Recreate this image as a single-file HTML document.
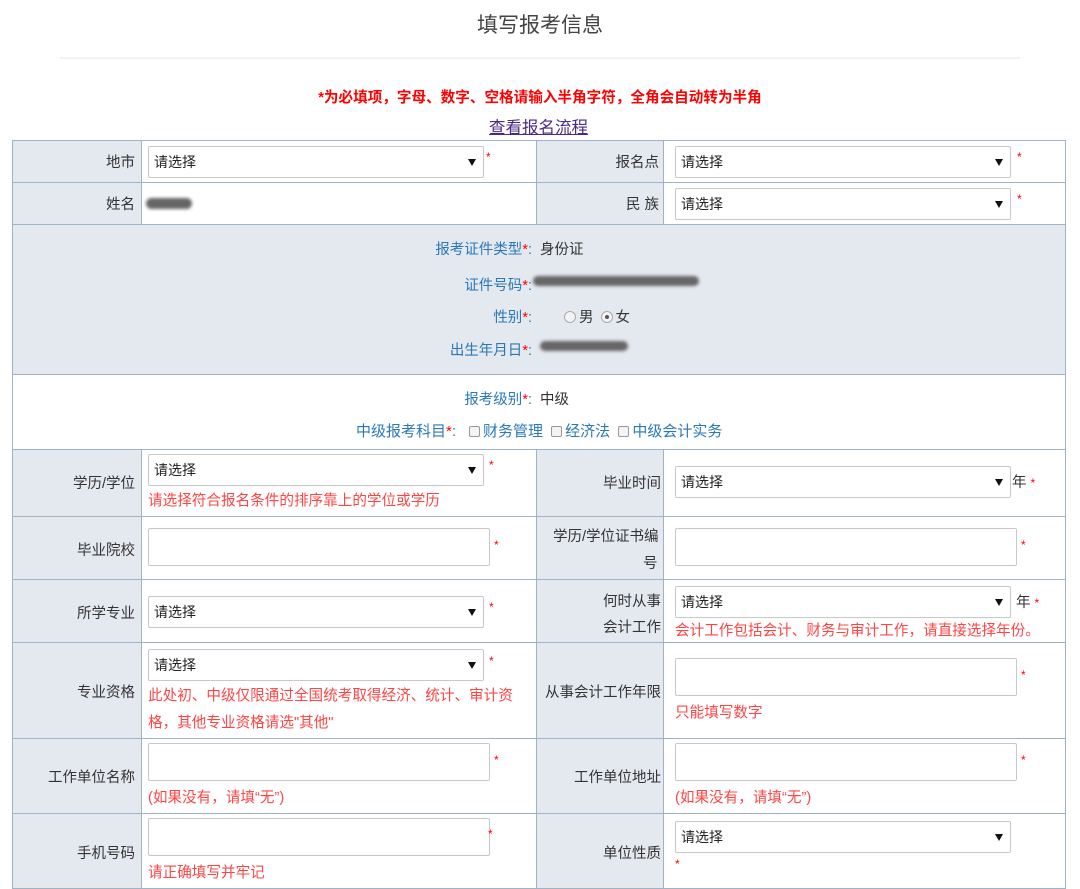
<!DOCTYPE html>
<html><head><meta charset="utf-8"><style>
*{margin:0;padding:0;box-sizing:border-box}
body{width:1080px;height:889px;background:#fff;position:relative;overflow:hidden;font-family:"Liberation Sans","Noto Sans CJK SC",sans-serif;font-size:14.5px;color:#333}
.a{position:absolute;white-space:nowrap}
.lb{position:absolute;background:#e4e8ef}
.hl{position:absolute;height:1px;background:#9fb3c8}
.vl{position:absolute;width:1px;background:#9fb3c8}
.sel{position:absolute;height:32px;border:1px solid #c8c8c8;border-radius:2px;background:#fff;font-size:14px;padding:5px 0 0 5px;color:#222}
.sel:after{content:"";position:absolute;right:7px;top:12px;border-left:4px solid transparent;border-right:4px solid transparent;border-top:7px solid #111}
.inp{position:absolute;height:38px;border:1px solid #c8c8c8;border-radius:2px;background:#fff}
.r{color:#f00}
.st{color:#f44;position:absolute;font-size:14.6px;white-space:nowrap}
.lab{position:absolute;text-align:right;width:120px;white-space:nowrap}
.blue{color:#2a78b8}
.rad{display:inline-block;width:12px;height:12px;border:1px solid #aaa;border-radius:50%;background:#f4f4f4;vertical-align:-1px;position:relative;margin:0 3px 0 0}
.chk{display:inline-block;width:11px;height:11px;border:1px solid #999;border-radius:2px;background:#f4f4f4;vertical-align:-1px;margin:0 3px 0 4px}
.blur{position:absolute;background:#666;border-radius:6px;filter:blur(1.5px)}
</style></head><body>
<div class="a" style="left:0;width:1080px;text-align:center;top:9px;font-size:21px;color:#444">填写报考信息</div>
<div class="a" style="left:60px;width:960px;top:57px;height:2px;background:#f2f2f2"></div>
<div class="a" style="left:0;width:1080px;text-align:center;top:86px;font-size:14.6px;font-weight:bold;color:#f00">*为必填项，字母、数字、空格请输入半角字符，全角会自动转为半角</div>
<div class="a" style="left:489px;top:114px;font-size:16.5px;color:#4b2a85;text-decoration:underline">查看报名流程</div>

<div class="lb" style="left:12px;top:140px;width:129px;height:84px"></div>
<div class="lb" style="left:536px;top:140px;width:127px;height:84px"></div>
<div class="lb" style="left:12px;top:224px;width:1054px;height:150px"></div>
<div class="lb" style="left:12px;top:449px;width:129px;height:440px"></div>
<div class="lb" style="left:536px;top:449px;width:127px;height:440px"></div>

<div class="hl" style="left:12px;width:1054px;top:140px"></div>
<div class="hl" style="left:12px;width:1054px;top:182px"></div>
<div class="hl" style="left:12px;width:1054px;top:224px"></div>
<div class="hl" style="left:12px;width:1054px;top:374px"></div>
<div class="hl" style="left:12px;width:1054px;top:449px"></div>
<div class="hl" style="left:12px;width:1054px;top:516px"></div>
<div class="hl" style="left:12px;width:1054px;top:579px"></div>
<div class="hl" style="left:12px;width:1054px;top:642px"></div>
<div class="hl" style="left:12px;width:1054px;top:738px"></div>
<div class="hl" style="left:12px;width:1054px;top:813px"></div>
<div class="hl" style="left:12px;width:1054px;top:888px"></div>
<div class="vl" style="left:12px;top:140px;height:749px"></div>
<div class="vl" style="left:1065px;top:140px;height:749px"></div>
<div class="vl" style="left:141px;top:140px;height:84px"></div>
<div class="vl" style="left:536px;top:140px;height:84px"></div>
<div class="vl" style="left:663px;top:140px;height:84px"></div>
<div class="vl" style="left:141px;top:449px;height:440px"></div>
<div class="vl" style="left:536px;top:449px;height:440px"></div>
<div class="vl" style="left:663px;top:449px;height:440px"></div>

<div class="lab" style="left:15px;top:151px">地市</div>
<div class="sel" style="left:148px;top:146px;width:336px">请选择</div>
<div class="a r" style="left:486px;top:150px;font-size:12px">*</div>
<div class="lab" style="left:539px;top:151px">报名点</div>
<div class="sel" style="left:675px;top:146px;width:336px">请选择</div>
<div class="a r" style="left:1017px;top:150px;font-size:12px">*</div>

<div class="lab" style="left:15px;top:193px">姓名</div>
<div class="blur" style="left:146px;top:198px;width:46px;height:11px"></div>
<div class="lab" style="left:539px;top:193px">民 族</div>
<div class="sel" style="left:675px;top:188px;width:336px">请选择</div>
<div class="a r" style="left:1017px;top:192px;font-size:12px">*</div>

<div class="a blue" style="right:548px;top:238px">报考证件类型<span class="r">*</span>:</div>
<div class="a" style="left:540px;top:238px">身份证</div>
<div class="a blue" style="right:548px;top:274px">证件号码<span class="r">*</span>:</div>
<div class="blur" style="left:533px;top:276px;width:166px;height:10px"></div>
<div class="a blue" style="right:548px;top:306px">性别<span class="r">*</span>:</div>
<div class="a" style="left:564px;top:306px"><span class="rad"></span>男 <span class="rad" style="margin-left:3px"><span style="position:absolute;left:3px;top:3px;width:4px;height:4px;border-radius:50%;background:#555"></span></span>女</div>
<div class="a blue" style="right:548px;top:339px">出生年月日<span class="r">*</span>:</div>
<div class="blur" style="left:540px;top:341px;width:88px;height:10px"></div>

<div class="a blue" style="right:548px;top:388px">报考级别<span class="r">*</span>:</div>
<div class="a" style="left:540px;top:388px">中级</div>
<div class="a blue" style="right:624px;top:420px;font-size:15px">中级报考科目<span class="r">*</span>:</div>
<div class="a blue" style="left:465px;top:420px;font-size:15px"><span class="chk"></span>财务管理 <span class="chk"></span>经济法 <span class="chk"></span>中级会计实务</div>

<div class="lab" style="left:15px;top:472px">学历/学位</div>
<div class="sel" style="left:148px;top:454px;width:336px">请选择</div>
<div class="a r" style="left:489px;top:458px;font-size:12px">*</div>
<div class="st" style="left:148px;top:489px">请选择符合报名条件的排序靠上的学位或学历</div>
<div class="lab" style="left:541px;top:472px">毕业时间</div>
<div class="sel" style="left:675px;top:466px;width:336px">请选择</div>
<div class="a" style="left:1012px;top:471px">年 <span class="r" style="font-size:12px">*</span></div>

<div class="lab" style="left:15px;top:539px">毕业院校</div>
<div class="inp" style="left:148px;top:528px;width:342px"></div>
<div class="a r" style="left:494px;top:538px;font-size:12px">*</div>
<div class="a" style="left:553px;top:525px">学历/学位证书编</div>
<div class="a" style="left:643px;top:552px">号</div>
<div class="inp" style="left:675px;top:528px;width:342px"></div>
<div class="a r" style="left:1021px;top:538px;font-size:12px">*</div>

<div class="lab" style="left:15px;top:602px">所学专业</div>
<div class="sel" style="left:148px;top:596px;width:336px">请选择</div>
<div class="a r" style="left:489px;top:600px;font-size:12px">*</div>
<div class="a" style="left:603px;top:590px">何时从事</div>
<div class="a" style="left:603px;top:616px">会计工作</div>
<div class="sel" style="left:675px;top:586px;width:336px">请选择</div>
<div class="a" style="left:1016px;top:591px">年 <span class="r" style="font-size:12px">*</span></div>
<div class="st" style="left:675px;top:619px">会计工作包括会计、财务与审计工作，请直接选择年份。</div>

<div class="lab" style="left:15px;top:681px">专业资格</div>
<div class="sel" style="left:148px;top:649px;width:336px">请选择</div>
<div class="a r" style="left:489px;top:654px;font-size:12px">*</div>
<div class="st" style="left:148px;top:684px">此处初、中级仅限通过全国统考取得经济、统计、审计资</div>
<div class="st" style="left:148px;top:711px">格，其他专业资格请选"其他"</div>
<div class="lab" style="left:541px;top:681px">从事会计工作年限</div>
<div class="inp" style="left:675px;top:658px;width:342px"></div>
<div class="a r" style="left:1021px;top:668px;font-size:12px">*</div>
<div class="st" style="left:675px;top:701px">只能填写数字</div>

<div class="lab" style="left:15px;top:766px">工作单位名称</div>
<div class="inp" style="left:148px;top:743px;width:342px"></div>
<div class="a r" style="left:494px;top:753px;font-size:12px">*</div>
<div class="st" style="left:148px;top:786px">(如果没有，请填“无”)</div>
<div class="lab" style="left:541px;top:766px">工作单位地址</div>
<div class="inp" style="left:675px;top:743px;width:342px"></div>
<div class="a r" style="left:1021px;top:753px;font-size:12px">*</div>
<div class="st" style="left:675px;top:786px">(如果没有，请填“无”)</div>

<div class="lab" style="left:15px;top:842px">手机号码</div>
<div class="inp" style="left:148px;top:818px;width:342px"></div>
<div class="a r" style="left:488px;top:827px;font-size:12px">*</div>
<div class="st" style="left:148px;top:861px">请正确填写并牢记</div>
<div class="lab" style="left:541px;top:842px">单位性质</div>
<div class="sel" style="left:675px;top:821px;width:336px">请选择</div>
<div class="a r" style="left:675px;top:857px;font-size:12px">*</div>
</body></html>
